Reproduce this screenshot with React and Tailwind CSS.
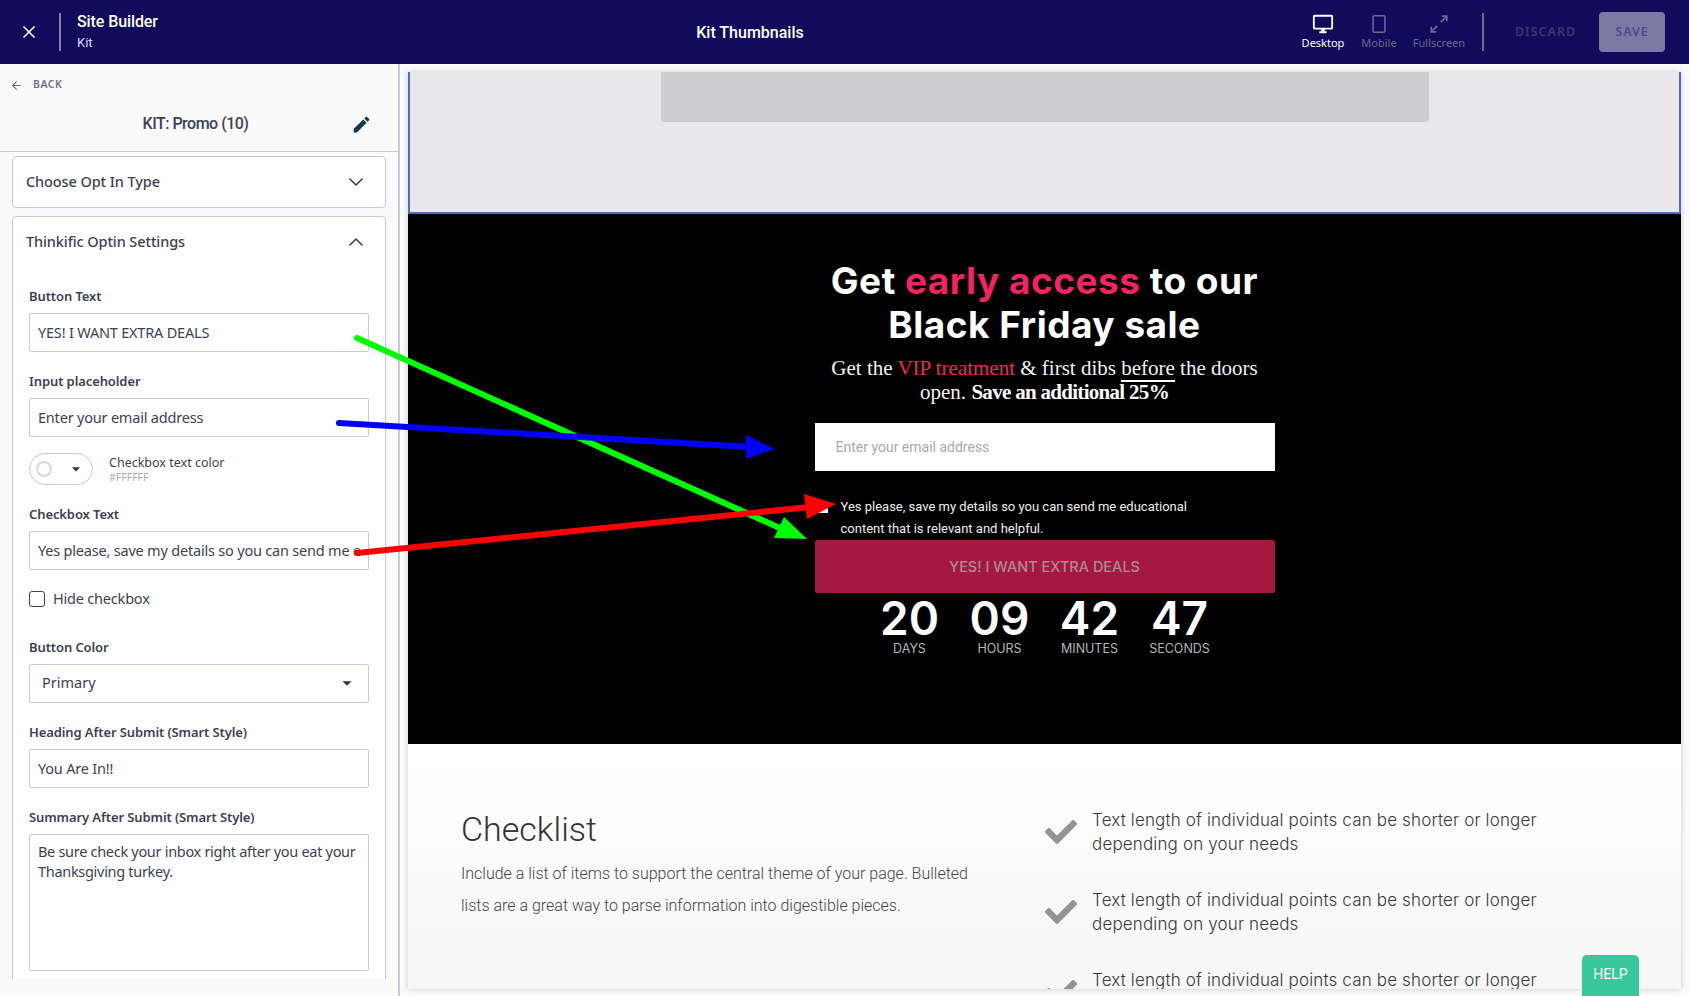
import { ArrowLeft, ChevronDown, ChevronUp, X } from "lucide-react";
import { FaCheck } from "react-icons/fa";
import { MdArrowDropDown, MdEdit, MdOutlineDesktopWindows } from "react-icons/md";

const sidebarFont = "font-['Noto_Sans',sans-serif]";
const titleFont = "font-['Roboto',sans-serif]";
const displayFont = "font-['Inter',sans-serif]";

const Label = ({ children, className = "" }) => (
  <div className={`h-5 mb-[7px] text-[13px] leading-5 font-semibold text-[#3d3f55] tracking-[-0.1px] ${className}`}>
    {children}
  </div>
);

const TextField = ({ value }) => (
  <input
    readOnly
    value={value}
    className="block w-full h-[39px] px-2 pb-[2px] bg-white border border-[#c9c9d9] rounded-[2px] text-[14.5px] tracking-[-0.2px] text-[#3d3f55] outline-none"
  />
);

const CHECK_ITEMS = [0, 1, 2];

const TopBar = () => (
  <header className="h-16 shrink-0 flex items-center bg-[#100b5b] text-white">
    <div className="w-[59px] pr-[2px] flex justify-center">
      <X size={20} strokeWidth={2} />
    </div>
    <div className="w-[2px] h-[38px] bg-[#85839f]" />
    <div className={`pl-4 w-[374px] ${titleFont}`}>
      <div className="text-[16px] leading-5 font-medium tracking-[-0.1px]">Site Builder</div>
      <div className="text-[13px] leading-5 mt-[1px] text-[#dddcec]">Kit</div>
    </div>
    <div className={`w-[630px] mt-[2px] text-center text-[16px] font-medium ${titleFont}`}>Kit Thumbnails</div>
    <div className={`ml-auto flex items-center h-full ${sidebarFont}`}>
      <div className="w-[56px] flex flex-col items-center">
        <MdOutlineDesktopWindows size={22} />
        <span className="text-[11px] leading-4">Desktop</span>
      </div>
      <div className="w-[56px] flex flex-col items-center text-[#6b6a8f]">
        <svg width="22" height="22" viewBox="0 0 24 24" fill="none" stroke="currentColor" strokeWidth="1.7">
          <rect x="5.5" y="3" width="13" height="18" rx="1.5" />
        </svg>
        <span className="text-[11px] leading-4">Mobile</span>
      </div>
      <div className="w-[64px] flex flex-col items-center text-[#6b6a8f]">
        <svg width="22" height="22" viewBox="0 0 24 24" fill="none" stroke="currentColor" strokeWidth="1.9">
          <path d="M14 10l6-6M15 3.5h5.5V9M10 14l-6 6M3.5 15v5.5H9" />
        </svg>
        <span className="text-[11px] leading-4">Fullscreen</span>
      </div>
      <div className="w-[2px] h-[38px] ml-[11px] bg-[#6d6a92]" />
      <div className="w-[115px] pl-2 text-center text-[12.5px] font-semibold tracking-[1px] text-[#3a3678]">DISCARD</div>
      <div className="w-[66px] h-10 flex items-center justify-center rounded-[4px] bg-[#7c78a4] text-[12.5px] font-semibold tracking-[0.8px] text-[#4e4a85]">
        SAVE
      </div>
      <div className="w-6" />
    </div>
  </header>
);

const Sidebar = () => (
  <aside className={`w-[400px] shrink-0 flex flex-col border-r-2 border-[#c9c9d9] bg-[#fafafa] ${sidebarFont}`}>
    <div className="h-[88px] shrink-0 border-b border-[#c9c9d9]">
      <div className="flex items-center gap-[10px] pl-[10px] pt-[13px] h-[29px] text-[#6f7085]">
        <ArrowLeft size={13} />
        <span className="text-[10.5px] font-semibold tracking-[0.5px]">BACK</span>
      </div>
      <div className="relative mt-[17px] text-center">
        <span className={`pr-[7px] text-[16px] leading-[28px] font-medium text-[#3d3f55] tracking-[-0.5px] ${titleFont}`}>KIT: Promo (10)</span>
        <MdEdit size={21} className="absolute right-[26px] top-[4px] text-[#0f3a52]" />
      </div>
    </div>
    <div className="h-[827px] overflow-hidden px-3 pt-1">
      <div className="h-[52px] flex items-center justify-between pl-[13px] pr-[17px] bg-white border border-[#c9c9d9] rounded-[4px]">
        <span className="text-[14.5px] font-medium text-[#3d3f55] tracking-[-0.1px]">Choose Opt In Type</span>
        <ChevronDown size={24} strokeWidth={1.6} className="text-[#3d3f55]" />
      </div>
      <div className="mt-[8px] pb-10 bg-white border border-[#c9c9d9] rounded-[4px]">
        <div className="h-[51px] pb-[1px] flex items-center justify-between pl-[13px] pr-[17px]">
          <span className="text-[14.5px] font-medium text-[#3d3f55] tracking-[-0.1px]">Thinkific Optin Settings</span>
          <ChevronUp size={24} strokeWidth={1.6} className="text-[#3d3f55]" />
        </div>
        <div className="px-4 pt-[18px]">
          <Label>Button Text</Label>
          <TextField value="YES! I WANT EXTRA DEALS" />
          <Label className="mt-[19px]">Input placeholder</Label>
          <TextField value="Enter your email address" />
          <div className="mt-[16px] h-8 flex items-center">
            <div className="w-[64px] h-8 flex items-center justify-between pl-[6px] pr-[6px] border border-[#c9c9d9] rounded-full">
              <span className="w-4 h-4 rounded-full bg-white border-2 border-[#d8d8d8]" />
              <MdArrowDropDown size={20} className="text-[#333548]" />
            </div>
            <div className="ml-4">
              <div className="text-[12.5px] leading-[15px] text-[#3d3f55]">Checkbox text color</div>
              <div className="text-[10.5px] leading-[14px] text-[#a9a9b5]">#FFFFFF</div>
            </div>
          </div>
          <Label className="mt-[19px]">Checkbox Text</Label>
          <TextField value="Yes please, save my details so you can send me educational content" />
          <div className="mt-[19px] h-5 flex items-center gap-2">
            <input type="checkbox" readOnly className="appearance-none block w-4 h-4 bg-white border border-[#3d3f55] rounded-[3px]" />
            <span className="text-[14.5px] tracking-[-0.2px] text-[#3d3f55]">Hide checkbox</span>
          </div>
          <Label className="mt-[28px]">Button Color</Label>
          <div className="h-[39px] pb-[1px] flex items-center justify-between pl-3 pr-[10px] bg-white border border-[#c9c9d9] rounded-[2px] text-[14.5px] text-[#3d3f55]">
            <span>Primary</span>
            <MdArrowDropDown size={22} className="text-[#333548]" />
          </div>
          <Label className="mt-[19px]">Heading After Submit (Smart Style)</Label>
          <TextField value="You Are In!!" />
          <Label className="mt-[19px]">Summary After Submit (Smart Style)</Label>
          <textarea
            readOnly
            value="Be sure check your inbox right after you eat your Thanksgiving turkey."
            className="block w-full h-[137px] pl-2 pr-0 py-[6px] resize-none bg-white border border-[#c9c9d9] rounded-[2px] text-[14.5px] leading-5 tracking-[-0.3px] text-[#3d3f55] outline-none"
          />
        </div>
      </div>
    </div>
  </aside>
);

const OptinBlock = () => (
  <section className="h-[530px] shrink-0 flex flex-col items-center bg-black text-white">
    <h2 className={`mt-[45px] w-[480px] text-center text-[37px] leading-[44px] font-bold tracking-[0.5px] ${displayFont}`}>
      Get <span className="text-[#f52362]">early access</span> to our
      <br />
      Black Friday sale
    </h2>
    <p className="mt-[9px] w-[480px] text-center text-[21px] leading-[24px] text-[#f2f2f2] font-['Liberation_Serif',serif]">
      Get the <span className="text-[#f52362]">VIP treatment</span> &amp; first dibs{" "}
      <span className="border-b-2 border-white">before</span> the doors
      <br />
      open. <b className="text-white tracking-[-0.7px]">Save an additional 25%</b>
    </p>
    <div className="mt-[19px] w-[460px] h-[48px] flex items-center pl-[21px] bg-white text-[14px] text-[#aaaaaa] font-['Roboto',sans-serif]">
      Enter your email address
    </div>
    <div className="mt-[25px] w-[460px] h-[44px] flex text-[13px] leading-[22px] text-[#eeeeee] font-['Roboto',sans-serif]">
      <span className="mt-[7px] ml-[3px] w-[10px] h-[10px] bg-white" />
      <span className="ml-[13px] w-[370px]">
        Yes please, save my details so you can send me educational content that is relevant and helpful.
      </span>
    </div>
    <div className={`w-[460px] h-[53px] flex items-center justify-center rounded-[2px] bg-[#a3193f] text-[14.5px] font-medium text-[#b08896] ${displayFont}`}>
      YES! I WANT EXTRA DEALS
    </div>
    <div className={`flex mt-[1px] ${displayFont}`}>
      {[
        ["20", "DAYS"],
        ["09", "HOURS"],
        ["42", "MINUTES"],
        ["47", "SECONDS"],
      ].map(([num, unit]) => (
        <div key={unit} className="w-[90px] flex flex-col items-center">
          <span className="text-[46px] leading-[48px] font-semibold">{num}</span>
          <span className="text-[12.5px] leading-[14px] text-[#b5b5b5]">{unit}</span>
        </div>
      ))}
    </div>
  </section>
);

const Checklist = () => (
  <section className="flex-1 flex overflow-hidden bg-gradient-to-b from-white to-[#f6f6f7]">
    <div className="w-[637px] pl-[53px] pt-[61px] font-['Roboto',sans-serif] font-light">
      <h3 className="text-[34px] leading-[48px] text-[#333333]">Checklist</h3>
      <p className="mt-[5px] w-[530px] text-[16px] leading-[32px] text-[#444444]">
        Include a list of items to support the central theme of your page. Bulleted lists are a great way to parse information into digestible pieces.
      </p>
    </div>
    <div className={`pt-[64px] font-light ${displayFont}`}>
      {CHECK_ITEMS.map((i) => (
        <div key={i} className="flex items-center h-[48px] mb-[32px]">
          <FaCheck size={32} className="w-8 text-[#949494]" />
          <p className="ml-[15px] w-[480px] text-[17px] leading-[24px] text-[#3a3a3a] tracking-[0.15px]">
            Text length of individual points can be shorter or longer depending on your needs
          </p>
        </div>
      ))}
    </div>
  </section>
);

const Arrows = () => (
  <svg className="absolute inset-0 pointer-events-none" width="1689" height="996" viewBox="0 0 1689 996">
    <g strokeWidth="6" strokeLinecap="round" fill="none">
      <path d="M357 338L782 529" stroke="#00ff00" />
      <path d="M339 423L750 447" stroke="#0000ff" />
      <path d="M357 553L810 507" stroke="#ff0000" />
    </g>
    <path d="M807 539L774 538L784 517Z" fill="#00ff00" />
    <path d="M775 449L746 435L746 459Z" fill="#0000ff" />
    <path d="M836 504L804 494L807 519Z" fill="#ff0000" />
  </svg>
);

export default function App() {
  return (
    <div className="relative w-[1689px] h-[996px] flex flex-col overflow-hidden bg-[#fafafa]">
      <TopBar />
      <div className="flex-1 flex min-h-0">
        <Sidebar />
        <main className="flex-1 flex flex-col ml-2 mt-2 mr-2 mb-[7px] shadow-[0_0_6px_rgba(0,0,0,0.2)]">
          <section className="h-[142px] shrink-0 flex justify-center bg-[#e9e9eb] border-x-2 border-b-2 border-[#5468c8]">
            <div className="w-[768px] h-[50px] bg-[#cdcdcf] rounded-b-[4px]" />
          </section>
          <OptinBlock />
          <Checklist />
        </main>
      </div>
      <Arrows />
      <div className="absolute left-[1582px] top-[955px] w-[57px] h-[41px] pt-[9px] flex justify-center rounded-t-[5px] bg-[#37c89b] text-[14px] text-white font-['Roboto',sans-serif]">
        HELP
      </div>
    </div>
  );
}
